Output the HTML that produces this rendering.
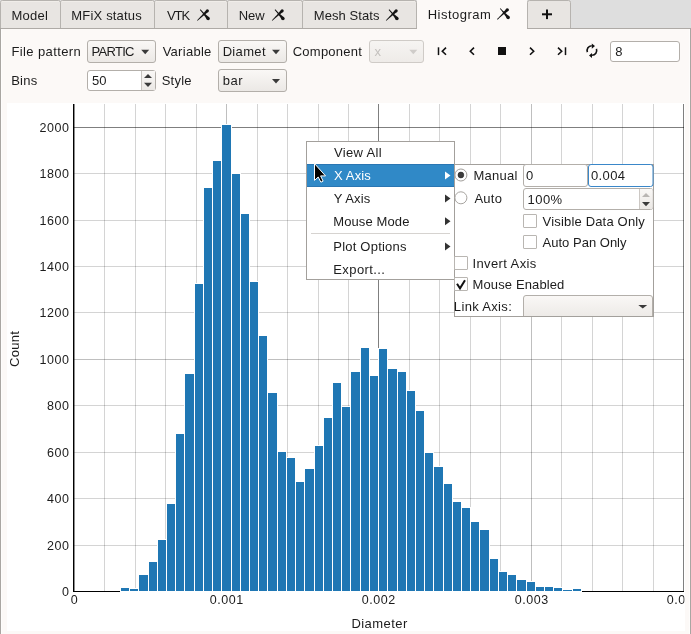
<!DOCTYPE html>
<html><head><meta charset="utf-8"><style>
html,body{margin:0;padding:0;width:691px;height:634px;overflow:hidden;background:#fcf9f7;}
svg text{font-family:"Liberation Sans",sans-serif;}
svg{will-change:transform;}
</style></head><body>
<svg width="691" height="634" viewBox="0 0 691 634" font-family="Liberation Sans, sans-serif" style="display:block"><rect x="0" y="0" width="691" height="634" fill="#fcf9f7" />
<rect x="0" y="0" width="691" height="28" fill="#dedede" />
<rect x="0" y="28" width="691" height="1" fill="#aeaaa6" />
<rect x="0" y="28" width="1" height="606" fill="#a9a6a2" />
<rect x="690" y="28" width="1" height="606" fill="#a9a6a2" />
<rect x="689" y="29" width="1" height="605" fill="#fefdfc" />
<rect x="1" y="29" width="1" height="605" fill="#fefdfc" />
<path d="M0.5,28 L0.5,2.5 Q0.5,0.5 2.5,0.5 L58.5,0.5 Q60.5,0.5 60.5,2.5 L60.5,28" fill="#e8e5e2" stroke="#b6b3af" stroke-width="1"/>
<rect x="1.5" y="1" width="57.5" height="1" fill="#f0ede9" />
<text x="11.45" y="19.9" font-size="13" fill="#1c1c1c" letter-spacing="0.262" >Model</text>
<path d="M60.5,28 L60.5,2.5 Q60.5,0.5 62.5,0.5 L152.5,0.5 Q154.5,0.5 154.5,2.5 L154.5,28" fill="#e8e5e2" stroke="#b6b3af" stroke-width="1"/>
<rect x="61.5" y="1" width="91.5" height="1" fill="#f0ede9" />
<text x="71.35" y="19.9" font-size="13" fill="#1c1c1c" letter-spacing="0.170" >MFiX status</text>
<path d="M154.5,28 L154.5,2.5 Q154.5,0.5 156.5,0.5 L225.5,0.5 Q227.5,0.5 227.5,2.5 L227.5,28" fill="#e8e5e2" stroke="#b6b3af" stroke-width="1"/>
<rect x="155.5" y="1" width="70.5" height="1" fill="#f0ede9" />
<text x="167.05" y="19.9" font-size="13" fill="#1c1c1c" letter-spacing="-1.125" >VTK</text>
<path d="M199.86,9.90 L200.52,10.66 L201.16,11.43 L201.79,12.21 L202.41,13.01 L203.01,13.81 L203.61,14.63 L204.19,15.45 L204.76,16.28 L205.33,17.12 L205.88,17.97 L206.43,18.83 L206.97,19.70 L209.43,17.50 L208.64,16.87 L207.85,16.23 L207.07,15.58 L206.30,14.92 L205.54,14.25 L204.79,13.57 L204.06,12.89 L203.33,12.19 L202.61,11.49 L201.91,10.77 L201.21,10.04 L200.54,9.30Z" fill="#141414"/>
<circle cx="208.20" cy="18.60" r="1.65" fill="#141414"/>
<path d="M197.58,20.79 L198.43,19.99 L199.29,19.20 L200.16,18.43 L201.05,17.66 L201.94,16.91 L202.85,16.17 L203.76,15.43 L204.68,14.70 L205.61,13.99 L206.54,13.28 L207.49,12.58 L208.44,11.88 L206.36,9.72 L205.63,10.64 L204.89,11.56 L204.14,12.46 L203.39,13.36 L202.63,14.25 L201.85,15.13 L201.07,16.01 L200.28,16.87 L199.49,17.72 L198.68,18.56 L197.86,19.39 L197.02,20.21Z" fill="#141414"/>
<circle cx="207.40" cy="10.80" r="1.50" fill="#141414"/>
<path d="M227.5,28 L227.5,2.5 Q227.5,0.5 229.5,0.5 L300.5,0.5 Q302.5,0.5 302.5,2.5 L302.5,28" fill="#e8e5e2" stroke="#b6b3af" stroke-width="1"/>
<rect x="228.5" y="1" width="72.5" height="1" fill="#f0ede9" />
<text x="238.75" y="19.9" font-size="13" fill="#1c1c1c" letter-spacing="-0.025" >New</text>
<path d="M274.66,9.90 L275.32,10.66 L275.96,11.43 L276.59,12.21 L277.21,13.01 L277.81,13.81 L278.41,14.63 L278.99,15.45 L279.56,16.28 L280.13,17.12 L280.68,17.97 L281.23,18.83 L281.77,19.70 L284.23,17.50 L283.44,16.87 L282.65,16.23 L281.87,15.58 L281.10,14.92 L280.34,14.25 L279.59,13.57 L278.86,12.89 L278.13,12.19 L277.41,11.49 L276.71,10.77 L276.01,10.04 L275.34,9.30Z" fill="#141414"/>
<circle cx="283.00" cy="18.60" r="1.65" fill="#141414"/>
<path d="M272.38,20.79 L273.23,19.99 L274.09,19.20 L274.96,18.43 L275.85,17.66 L276.74,16.91 L277.65,16.17 L278.56,15.43 L279.48,14.70 L280.41,13.99 L281.34,13.28 L282.29,12.58 L283.24,11.88 L281.16,9.72 L280.43,10.64 L279.69,11.56 L278.94,12.46 L278.19,13.36 L277.43,14.25 L276.65,15.13 L275.87,16.01 L275.08,16.87 L274.29,17.72 L273.48,18.56 L272.66,19.39 L271.82,20.21Z" fill="#141414"/>
<circle cx="282.20" cy="10.80" r="1.50" fill="#141414"/>
<path d="M302.5,28 L302.5,2.5 Q302.5,0.5 304.5,0.5 L414.5,0.5 Q416.5,0.5 416.5,2.5 L416.5,28" fill="#e8e5e2" stroke="#b6b3af" stroke-width="1"/>
<rect x="303.5" y="1" width="111.5" height="1" fill="#f0ede9" />
<text x="313.75" y="19.9" font-size="13" fill="#1c1c1c" letter-spacing="0.078" >Mesh Stats</text>
<path d="M388.66,9.90 L389.32,10.66 L389.96,11.43 L390.59,12.21 L391.21,13.01 L391.81,13.81 L392.41,14.63 L392.99,15.45 L393.56,16.28 L394.13,17.12 L394.68,17.97 L395.23,18.83 L395.77,19.70 L398.23,17.50 L397.44,16.87 L396.65,16.23 L395.87,15.58 L395.10,14.92 L394.34,14.25 L393.59,13.57 L392.86,12.89 L392.13,12.19 L391.41,11.49 L390.71,10.77 L390.01,10.04 L389.34,9.30Z" fill="#141414"/>
<circle cx="397.00" cy="18.60" r="1.65" fill="#141414"/>
<path d="M386.38,20.79 L387.23,19.99 L388.09,19.20 L388.96,18.43 L389.85,17.66 L390.74,16.91 L391.65,16.17 L392.56,15.43 L393.48,14.70 L394.41,13.99 L395.34,13.28 L396.29,12.58 L397.24,11.88 L395.16,9.72 L394.43,10.64 L393.69,11.56 L392.94,12.46 L392.19,13.36 L391.43,14.25 L390.65,15.13 L389.87,16.01 L389.08,16.87 L388.29,17.72 L387.48,18.56 L386.66,19.39 L385.82,20.21Z" fill="#141414"/>
<circle cx="396.20" cy="10.80" r="1.50" fill="#141414"/>
<rect x="417" y="0" width="110" height="29" fill="#fcf9f7" />
<text x="427.75" y="18.8" font-size="13" fill="#1c1c1c" letter-spacing="0.469" >Histogram</text>
<path d="M499.86,8.80 L500.52,9.56 L501.16,10.33 L501.79,11.11 L502.41,11.91 L503.01,12.71 L503.61,13.53 L504.19,14.35 L504.76,15.18 L505.33,16.02 L505.88,16.87 L506.43,17.73 L506.97,18.60 L509.43,16.40 L508.64,15.77 L507.85,15.13 L507.07,14.48 L506.30,13.82 L505.54,13.15 L504.79,12.47 L504.06,11.79 L503.33,11.09 L502.61,10.39 L501.91,9.67 L501.21,8.94 L500.54,8.20Z" fill="#141414"/>
<circle cx="508.20" cy="17.50" r="1.65" fill="#141414"/>
<path d="M497.58,19.69 L498.43,18.89 L499.29,18.10 L500.16,17.33 L501.05,16.56 L501.94,15.81 L502.85,15.07 L503.76,14.33 L504.68,13.60 L505.61,12.89 L506.54,12.18 L507.49,11.48 L508.44,10.78 L506.36,8.62 L505.63,9.54 L504.89,10.46 L504.14,11.36 L503.39,12.26 L502.63,13.15 L501.85,14.03 L501.07,14.91 L500.28,15.77 L499.49,16.62 L498.68,17.46 L497.86,18.29 L497.02,19.11Z" fill="#141414"/>
<circle cx="507.40" cy="9.70" r="1.50" fill="#141414"/>
<path d="M527.5,28 L527.5,2.5 Q527.5,0.5 529.5,0.5 L568.5,0.5 Q570.5,0.5 570.5,2.5 L570.5,28" fill="#e8e5e2" stroke="#b6b3af" stroke-width="1"/>
<rect x="542" y="13.3" width="10" height="2" fill="#111" />
<rect x="546" y="9.5" width="2" height="9.6" fill="#111" />
<text x="11.45" y="56" font-size="13" fill="#1c1c1c" letter-spacing="0.386" >File pattern</text>
<text x="162.65" y="55.8" font-size="13" fill="#1c1c1c" letter-spacing="0.271" >Variable</text>
<text x="292.75" y="55.8" font-size="13" fill="#1c1c1c" letter-spacing="0.231" >Component</text>
<text x="11.15" y="84.8" font-size="13" fill="#1c1c1c" letter-spacing="0.267" >Bins</text>
<text x="161.70" y="85.1" font-size="13" fill="#1c1c1c" letter-spacing="0.250" >Style</text>
<defs><linearGradient id="btn" x1="0" y1="0" x2="0" y2="1"><stop offset="0" stop-color="#faf8f6"/><stop offset="1" stop-color="#ebe8e5"/></linearGradient><linearGradient id="btnd" x1="0" y1="0" x2="0" y2="1"><stop offset="0" stop-color="#f6f4f2"/><stop offset="1" stop-color="#eeebe8"/></linearGradient></defs>
<rect x="87.5" y="40.5" width="68" height="22" rx="2.5" fill="url(#btn)" stroke="#b3afaa"/>
<path d="M141.2,49.8 L149.2,49.8 L145.2,54.2Z" fill="#3a3a3a"/>
<text x="91.55" y="56.1" font-size="13" fill="#1c1c1c" letter-spacing="-0.710" >PARTIC</text>
<rect x="218.5" y="40.5" width="68" height="22" rx="2.5" fill="url(#btn)" stroke="#b3afaa"/>
<path d="M272,49.8 L280,49.8 L276,54.2Z" fill="#3a3a3a"/>
<text x="222.65" y="56.2" font-size="13" fill="#1c1c1c" letter-spacing="0.340" >Diamet</text>
<rect x="369.5" y="40.5" width="54" height="22" rx="2.5" fill="url(#btnd)" stroke="#cfcbc7"/>
<path d="M409.3,49.8 L417.3,49.8 L413.3,54.2Z" fill="#cfccc9"/>
<text x="374.45" y="56" font-size="13" fill="#c4c1be" letter-spacing="0.000" >x</text>
<rect x="218.5" y="69.5" width="68" height="22" rx="2.5" fill="url(#btn)" stroke="#b3afaa"/>
<path d="M272,79.1 L280,79.1 L276,83.5Z" fill="#3a3a3a"/>
<text x="222.75" y="85.1" font-size="13" fill="#1c1c1c" letter-spacing="0.550" >bar</text>
<rect x="87.5" y="70.5" width="68" height="20" rx="2.5" fill="#fff" stroke="#b3afaa"/>
<rect x="141.5" y="71" width="13.5" height="19" fill="url(#btn)"/>
<path d="M141.5,71 L141.5,90" stroke="#c8c4c0"/>
<text x="92.05" y="84.8" font-size="13" fill="#1c1c1c" letter-spacing="-0.150" >50</text>
<path d="M144,78 L152,78 L148,74Z M144,82.8 L152,82.8 L148,87Z" fill="#3a3a3a"/>
<path d="M438.5,47.3 L438.5,55.1" stroke="#111" stroke-width="1.5"/>
<path d="M446,47.6 L442.3,51.2 L446,54.8" stroke="#111" stroke-width="1.6" fill="none"/>
<path d="M474,47.6 L470.3,51.2 L474,54.8" stroke="#111" stroke-width="1.6" fill="none"/>
<rect x="498" y="47" width="8" height="8" fill="#111" />
<path d="M530,47.6 L533.7,51.2 L530,54.8" stroke="#111" stroke-width="1.6" fill="none"/>
<path d="M558,47.6 L561.7,51.2 L558,54.8" stroke="#111" stroke-width="1.6" fill="none"/>
<path d="M565.5,47.3 L565.5,55.1" stroke="#111" stroke-width="1.5"/>
<path d="M587.39,52.14 A4.8,4.8 0 0 1 591.73,45.70 M596.41,48.86 A4.8,4.8 0 0 1 592.07,55.30" stroke="#111" stroke-width="1.6" fill="none"/>
<path d="M591.8,43.4 L591.8,48.8 L595,46.1Z M592,52.9 L592,57.9 L589,55.4Z" fill="#111"/>
<rect x="610.5" y="41.5" width="69" height="20" rx="2.5" fill="#fff" stroke="#b3afaa"/>
<text x="615.15" y="56" font-size="13" fill="#1c1c1c" letter-spacing="0.000" >8</text>
<rect x="7" y="103" width="678" height="528" fill="#fff" />
<rect x="104" y="104" width="1" height="487" fill="rgba(0,0,0,0.17)" />
<rect x="135" y="104" width="1" height="487" fill="rgba(0,0,0,0.17)" />
<rect x="165" y="104" width="1" height="487" fill="rgba(0,0,0,0.17)" />
<rect x="196" y="104" width="1" height="487" fill="rgba(0,0,0,0.17)" />
<rect x="226" y="104" width="1" height="487" fill="rgba(0,0,0,0.25)" />
<rect x="257" y="104" width="1" height="487" fill="rgba(0,0,0,0.17)" />
<rect x="287" y="104" width="1" height="487" fill="rgba(0,0,0,0.17)" />
<rect x="318" y="104" width="1" height="487" fill="rgba(0,0,0,0.17)" />
<rect x="348" y="104" width="1" height="487" fill="rgba(0,0,0,0.17)" />
<rect x="378" y="104" width="1" height="487" fill="rgba(0,0,0,0.5)" />
<rect x="409" y="104" width="1" height="487" fill="rgba(0,0,0,0.17)" />
<rect x="439" y="104" width="1" height="487" fill="rgba(0,0,0,0.17)" />
<rect x="470" y="104" width="1" height="487" fill="rgba(0,0,0,0.17)" />
<rect x="500" y="104" width="1" height="487" fill="rgba(0,0,0,0.17)" />
<rect x="531" y="104" width="1" height="487" fill="rgba(0,0,0,0.25)" />
<rect x="561" y="104" width="1" height="487" fill="rgba(0,0,0,0.17)" />
<rect x="592" y="104" width="1" height="487" fill="rgba(0,0,0,0.17)" />
<rect x="622" y="104" width="1" height="487" fill="rgba(0,0,0,0.17)" />
<rect x="653" y="104" width="1" height="487" fill="rgba(0,0,0,0.17)" />
<rect x="683" y="104" width="1" height="487" fill="rgba(0,0,0,0.5)" />
<rect x="74" y="545" width="610" height="1" fill="rgba(0,0,0,0.17)" />
<rect x="74" y="498" width="610" height="1" fill="rgba(0,0,0,0.17)" />
<rect x="74" y="452" width="610" height="1" fill="rgba(0,0,0,0.17)" />
<rect x="74" y="405" width="610" height="1" fill="rgba(0,0,0,0.17)" />
<rect x="74" y="359" width="610" height="1" fill="rgba(0,0,0,0.25)" />
<rect x="74" y="312" width="610" height="1" fill="rgba(0,0,0,0.17)" />
<rect x="74" y="266" width="610" height="1" fill="rgba(0,0,0,0.17)" />
<rect x="74" y="220" width="610" height="1" fill="rgba(0,0,0,0.17)" />
<rect x="74" y="173" width="610" height="1" fill="rgba(0,0,0,0.17)" />
<rect x="74" y="127" width="610" height="1" fill="rgba(0,0,0,0.5)" />
<rect x="73" y="104" width="1" height="488" fill="#000" />
<rect x="74" y="104" width="1" height="487" fill="rgba(0,0,0,0.45)" />
<rect x="73" y="591" width="611" height="1" fill="#000" />
<rect x="120" y="587" width="10" height="5" fill="#fff"/>
<rect x="129" y="588" width="10" height="4" fill="#fff"/>
<rect x="138" y="574" width="11" height="18" fill="#fff"/>
<rect x="148" y="561" width="10" height="31" fill="#fff"/>
<rect x="157" y="539" width="10" height="53" fill="#fff"/>
<rect x="166" y="503" width="10" height="89" fill="#fff"/>
<rect x="175" y="433" width="10" height="159" fill="#fff"/>
<rect x="184" y="373" width="11" height="219" fill="#fff"/>
<rect x="194" y="283" width="10" height="309" fill="#fff"/>
<rect x="203" y="187" width="10" height="405" fill="#fff"/>
<rect x="212" y="160" width="10" height="432" fill="#fff"/>
<rect x="221" y="124" width="11" height="468" fill="#fff"/>
<rect x="231" y="173" width="10" height="419" fill="#fff"/>
<rect x="240" y="213" width="10" height="379" fill="#fff"/>
<rect x="249" y="281" width="10" height="311" fill="#fff"/>
<rect x="258" y="335" width="10" height="257" fill="#fff"/>
<rect x="267" y="392" width="11" height="200" fill="#fff"/>
<rect x="277" y="451" width="10" height="141" fill="#fff"/>
<rect x="286" y="457" width="10" height="135" fill="#fff"/>
<rect x="295" y="481" width="10" height="111" fill="#fff"/>
<rect x="304" y="468" width="11" height="124" fill="#fff"/>
<rect x="314" y="445" width="10" height="147" fill="#fff"/>
<rect x="323" y="417" width="10" height="175" fill="#fff"/>
<rect x="332" y="382" width="10" height="210" fill="#fff"/>
<rect x="341" y="406" width="10" height="186" fill="#fff"/>
<rect x="350" y="371" width="11" height="221" fill="#fff"/>
<rect x="360" y="347" width="10" height="245" fill="#fff"/>
<rect x="369" y="375" width="10" height="217" fill="#fff"/>
<rect x="378" y="348" width="10" height="244" fill="#fff"/>
<rect x="387" y="368" width="11" height="224" fill="#fff"/>
<rect x="397" y="371" width="10" height="221" fill="#fff"/>
<rect x="406" y="390" width="10" height="202" fill="#fff"/>
<rect x="415" y="410" width="10" height="182" fill="#fff"/>
<rect x="424" y="452" width="10" height="140" fill="#fff"/>
<rect x="433" y="466" width="11" height="126" fill="#fff"/>
<rect x="443" y="483" width="10" height="109" fill="#fff"/>
<rect x="452" y="501" width="10" height="91" fill="#fff"/>
<rect x="461" y="507" width="10" height="85" fill="#fff"/>
<rect x="470" y="521" width="10" height="71" fill="#fff"/>
<rect x="479" y="529" width="11" height="63" fill="#fff"/>
<rect x="489" y="558" width="10" height="34" fill="#fff"/>
<rect x="498" y="571" width="10" height="21" fill="#fff"/>
<rect x="507" y="574" width="10" height="18" fill="#fff"/>
<rect x="516" y="579" width="11" height="13" fill="#fff"/>
<rect x="526" y="581" width="10" height="11" fill="#fff"/>
<rect x="535" y="586" width="10" height="6" fill="#fff"/>
<rect x="544" y="586" width="10" height="6" fill="#fff"/>
<rect x="553" y="587" width="10" height="5" fill="#fff"/>
<rect x="562" y="589" width="11" height="3" fill="#fff"/>
<rect x="572" y="588" width="10" height="4" fill="#fff"/>
<rect x="121" y="588" width="8" height="3" fill="#1f77b4"/>
<rect x="130" y="589" width="8" height="2" fill="#1f77b4"/>
<rect x="139" y="575" width="9" height="16" fill="#1f77b4"/>
<rect x="149" y="562" width="8" height="29" fill="#1f77b4"/>
<rect x="158" y="540" width="8" height="51" fill="#1f77b4"/>
<rect x="167" y="504" width="8" height="87" fill="#1f77b4"/>
<rect x="176" y="434" width="8" height="157" fill="#1f77b4"/>
<rect x="185" y="374" width="9" height="217" fill="#1f77b4"/>
<rect x="195" y="284" width="8" height="307" fill="#1f77b4"/>
<rect x="204" y="188" width="8" height="403" fill="#1f77b4"/>
<rect x="213" y="161" width="8" height="430" fill="#1f77b4"/>
<rect x="222" y="125" width="9" height="466" fill="#1f77b4"/>
<rect x="232" y="174" width="8" height="417" fill="#1f77b4"/>
<rect x="241" y="214" width="8" height="377" fill="#1f77b4"/>
<rect x="250" y="282" width="8" height="309" fill="#1f77b4"/>
<rect x="259" y="336" width="8" height="255" fill="#1f77b4"/>
<rect x="268" y="393" width="9" height="198" fill="#1f77b4"/>
<rect x="278" y="452" width="8" height="139" fill="#1f77b4"/>
<rect x="287" y="458" width="8" height="133" fill="#1f77b4"/>
<rect x="296" y="482" width="8" height="109" fill="#1f77b4"/>
<rect x="305" y="469" width="9" height="122" fill="#1f77b4"/>
<rect x="315" y="446" width="8" height="145" fill="#1f77b4"/>
<rect x="324" y="418" width="8" height="173" fill="#1f77b4"/>
<rect x="333" y="383" width="8" height="208" fill="#1f77b4"/>
<rect x="342" y="407" width="8" height="184" fill="#1f77b4"/>
<rect x="351" y="372" width="9" height="219" fill="#1f77b4"/>
<rect x="361" y="348" width="8" height="243" fill="#1f77b4"/>
<rect x="370" y="376" width="8" height="215" fill="#1f77b4"/>
<rect x="379" y="349" width="8" height="242" fill="#1f77b4"/>
<rect x="388" y="369" width="9" height="222" fill="#1f77b4"/>
<rect x="398" y="372" width="8" height="219" fill="#1f77b4"/>
<rect x="407" y="391" width="8" height="200" fill="#1f77b4"/>
<rect x="416" y="411" width="8" height="180" fill="#1f77b4"/>
<rect x="425" y="453" width="8" height="138" fill="#1f77b4"/>
<rect x="434" y="467" width="9" height="124" fill="#1f77b4"/>
<rect x="444" y="484" width="8" height="107" fill="#1f77b4"/>
<rect x="453" y="502" width="8" height="89" fill="#1f77b4"/>
<rect x="462" y="508" width="8" height="83" fill="#1f77b4"/>
<rect x="471" y="522" width="8" height="69" fill="#1f77b4"/>
<rect x="480" y="530" width="9" height="61" fill="#1f77b4"/>
<rect x="490" y="559" width="8" height="32" fill="#1f77b4"/>
<rect x="499" y="572" width="8" height="19" fill="#1f77b4"/>
<rect x="508" y="575" width="8" height="16" fill="#1f77b4"/>
<rect x="517" y="580" width="9" height="11" fill="#1f77b4"/>
<rect x="527" y="582" width="8" height="9" fill="#1f77b4"/>
<rect x="536" y="587" width="8" height="4" fill="#1f77b4"/>
<rect x="545" y="587" width="8" height="4" fill="#1f77b4"/>
<rect x="554" y="588" width="8" height="3" fill="#1f77b4"/>
<rect x="563" y="590" width="9" height="1" fill="#1f77b4"/>
<rect x="573" y="589" width="8" height="2" fill="#1f77b4"/>
<text x="61.91" y="595.9" font-size="12.5" fill="#1c1c1c" letter-spacing="0.000" >0</text>
<text x="46.92" y="549.9" font-size="12.5" fill="#1c1c1c" letter-spacing="0.550" >200</text>
<text x="46.92" y="502.9" font-size="12.5" fill="#1c1c1c" letter-spacing="0.550" >400</text>
<text x="46.92" y="456.9" font-size="12.5" fill="#1c1c1c" letter-spacing="0.550" >600</text>
<text x="46.92" y="409.9" font-size="12.5" fill="#1c1c1c" letter-spacing="0.550" >800</text>
<text x="39.39" y="363.9" font-size="12.5" fill="#1c1c1c" letter-spacing="0.550" >1000</text>
<text x="39.39" y="316.9" font-size="12.5" fill="#1c1c1c" letter-spacing="0.550" >1200</text>
<text x="39.39" y="270.9" font-size="12.5" fill="#1c1c1c" letter-spacing="0.550" >1400</text>
<text x="39.39" y="224.9" font-size="12.5" fill="#1c1c1c" letter-spacing="0.550" >1600</text>
<text x="39.39" y="177.9" font-size="12.5" fill="#1c1c1c" letter-spacing="0.550" >1800</text>
<text x="39.39" y="131.9" font-size="12.5" fill="#1c1c1c" letter-spacing="0.550" >2000</text>
<clipPath id="cp"><rect x="0" y="0" width="684.5" height="634"/></clipPath>
<text x="70.86" y="603.8" font-size="12.5" fill="#1c1c1c" letter-spacing="0.000" clip-path="url(#cp)">0</text>
<text x="209.82" y="603.8" font-size="12.5" fill="#1c1c1c" letter-spacing="0.550" clip-path="url(#cp)">0.001</text>
<text x="361.82" y="603.8" font-size="12.5" fill="#1c1c1c" letter-spacing="0.550" clip-path="url(#cp)">0.002</text>
<text x="514.80" y="603.8" font-size="12.5" fill="#1c1c1c" letter-spacing="0.550" clip-path="url(#cp)">0.003</text>
<text x="666.70" y="603.8" font-size="12.5" fill="#1c1c1c" letter-spacing="0.550" clip-path="url(#cp)">0.004</text>
<text x="351.45" y="627.6" font-size="13" fill="#1c1c1c" letter-spacing="0.450" >Diameter</text>
<g transform="translate(19.4,366.3) rotate(-90)">
<text x="-0.65" y="0" font-size="13" fill="#1c1c1c" letter-spacing="0.287" >Count</text>
</g>
<rect x="306.5" y="141.5" width="148" height="138" fill="#fff" stroke="#a3a09c"/>
<rect x="307" y="164" width="147" height="23" fill="#3089c7" />
<rect x="307" y="164" width="147" height="1" fill="#2a76b3" />
<rect x="307" y="186" width="147" height="1" fill="#2a76b3" />
<text x="334.05" y="156.9" font-size="13" fill="#1c1c1c" letter-spacing="0.321" >View All</text>
<text x="334.10" y="179.7" font-size="13" fill="#fff" letter-spacing="0.100" >X Axis</text>
<text x="333.80" y="202.5" font-size="13" fill="#1c1c1c" letter-spacing="0.090" >Y Axis</text>
<text x="333.25" y="225.8" font-size="13" fill="#1c1c1c" letter-spacing="0.111" >Mouse Mode</text>
<rect x="311" y="233" width="139" height="1" fill="#d6d3d0" />
<text x="333.25" y="250.8" font-size="13" fill="#1c1c1c" letter-spacing="0.218" >Plot Options</text>
<text x="333.25" y="274" font-size="13" fill="#1c1c1c" letter-spacing="0.412" >Export...</text>
<path d="M445,171.5 L450.5,175.5 L445,179.5Z" fill="#ffffff"/>
<path d="M445,194.4 L450.5,198.4 L445,202.4Z" fill="#333"/>
<path d="M445,217.3 L450.5,221.3 L445,225.3Z" fill="#333"/>
<path d="M445,242.4 L450.5,246.4 L445,250.4Z" fill="#333"/>
<rect x="454.5" y="164.5" width="199" height="152" fill="#fff" stroke="#a3a09c"/>
<circle cx="460.9" cy="175.0" r="6.0" fill="#fff" stroke="#a09d99"/>
<circle cx="460.9" cy="175.0" r="2.9" fill="#3c3c3c" stroke="#222" stroke-width="0.6"/>
<circle cx="460.9" cy="197.8" r="6.0" fill="#fff" stroke="#a8a5a1"/>
<text x="473.45" y="180.2" font-size="13" fill="#1c1c1c" letter-spacing="0.280" >Manual</text>
<text x="474.45" y="202.8" font-size="13" fill="#1c1c1c" letter-spacing="0.250" >Auto</text>
<rect x="523.5" y="164.5" width="64" height="22" rx="2.5" fill="#fff" stroke="#b3afaa"/>
<text x="526.10" y="180" font-size="13" fill="#1c1c1c" letter-spacing="0.000" >0</text>
<rect x="588.5" y="164.5" width="64.5" height="22" rx="2.5" fill="#fff" stroke="#3a87c9"/>
<text x="590.90" y="180" font-size="13" fill="#1c1c1c" letter-spacing="0.388" >0.004</text>
<rect x="523.5" y="188.5" width="129.5" height="21" rx="2.5" fill="#fff" stroke="#b3afaa"/>
<rect x="640" y="189" width="12.5" height="20" fill="url(#btn)" />
<path d="M639.5,189 L639.5,209" stroke="#ccc8c4"/>
<text x="527.50" y="203.8" font-size="13" fill="#1c1c1c" letter-spacing="0.467" >100%</text>
<path d="M642,197 L650,197 L646,193Z" fill="#b9b6b3"/><path d="M642,202 L650,202 L646,206.3Z" fill="#3a3a3a"/>
<rect x="523.5" y="214.5" width="13" height="13" rx="0.5" fill="#fff" stroke="#b9b6b2"/>
<text x="542.55" y="226.2" font-size="13" fill="#1c1c1c" letter-spacing="0.178" >Visible Data Only</text>
<rect x="523.5" y="235.5" width="13" height="13" rx="0.5" fill="#fff" stroke="#b9b6b2"/>
<text x="542.55" y="246.9" font-size="13" fill="#1c1c1c" letter-spacing="0.012" >Auto Pan Only</text>
<rect x="454.5" y="256.5" width="13" height="13" rx="0.5" fill="#fff" stroke="#b9b6b2"/>
<text x="472.40" y="267.8" font-size="13" fill="#1c1c1c" letter-spacing="0.400" >Invert Axis</text>
<rect x="454.5" y="277.5" width="13" height="13" rx="0.5" fill="#fff" stroke="#b9b6b2"/>
<path d="M457,283.8 L460,288.3 L465,280.2" stroke="#111" stroke-width="2" fill="none"/>
<text x="472.55" y="288.6" font-size="13" fill="#1c1c1c" letter-spacing="0.121" >Mouse Enabled</text>
<text x="453.85" y="310.8" font-size="13" fill="#1c1c1c" letter-spacing="0.333" >Link Axis:</text>
<clipPath id="cps"><rect x="454" y="164" width="200" height="152"/></clipPath>
<rect x="523.5" y="295.5" width="129" height="24" rx="2.5" fill="url(#btn)" stroke="#b3afaa" clip-path="url(#cps)"/>
<rect x="454" y="316" width="200" height="1" fill="#a3a09c" />
<path d="M638.3,304.9 L647.2,304.9 L642.75,308.5Z" fill="#3a3a3a"/>
<path d="M314.50,163.60 L314.50,180.40 L318.20,177.00 L320.90,182.20 L323.10,181.10 L320.60,175.90 L325.50,175.90Z" fill="#000" stroke="#fff" stroke-width="1" stroke-linejoin="round"/></svg>
</body></html>
